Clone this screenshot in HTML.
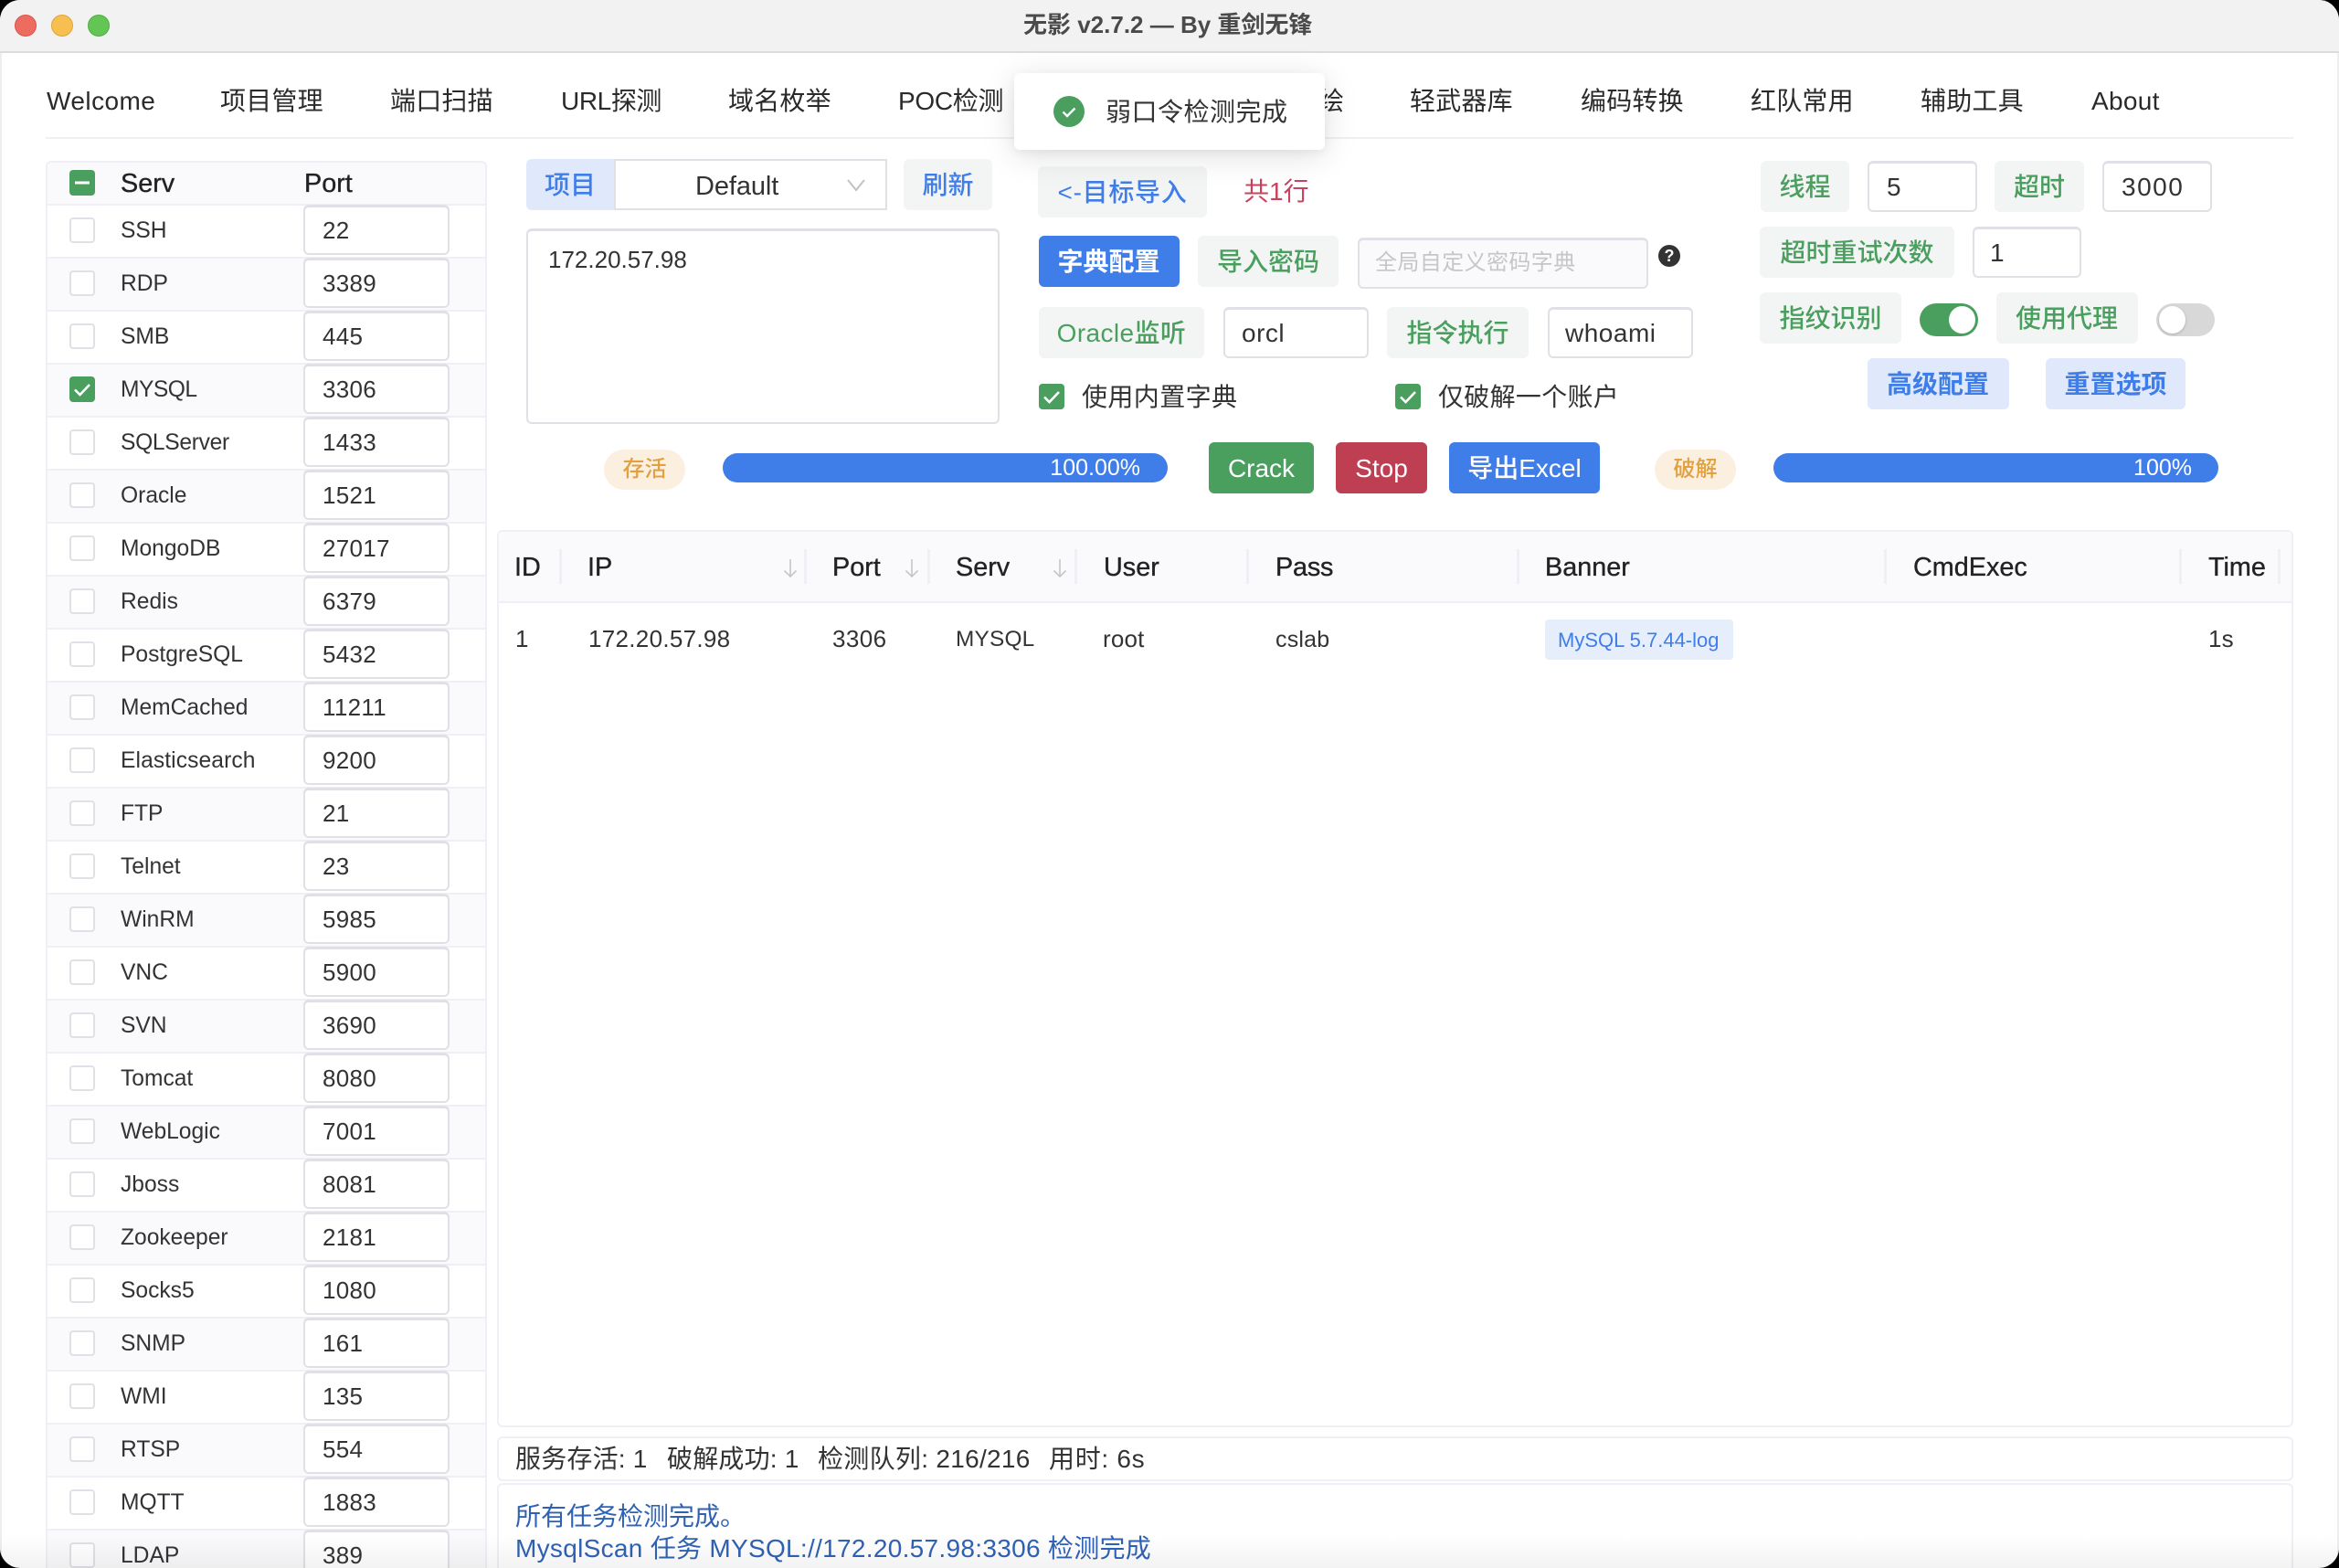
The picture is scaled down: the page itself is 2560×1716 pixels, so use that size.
<!DOCTYPE html>
<html lang="zh">
<head>
<meta charset="utf-8">
<title>无影</title>
<style>
html,body{margin:0;padding:0;background:#000;width:2560px;height:1716px;overflow:hidden}
body{font-family:"Liberation Sans","Noto Sans CJK SC",sans-serif;color:#333}
#win{position:absolute;left:0;top:0;width:2560px;height:1716px;background:#fff;border-radius:22px;overflow:hidden}
.a{position:absolute;white-space:nowrap}
#tb{position:absolute;left:0;top:0;width:2560px;height:58px;background:#f2f2f2;border-bottom:2px solid #dcdcdc;box-sizing:border-box}
.tl{position:absolute;top:16px;width:24px;height:24px;border-radius:50%;box-sizing:border-box}
.nav{position:absolute;top:91px;line-height:40px;font-size:28px;color:#2a2a2a;white-space:nowrap}
.b{position:absolute;height:56px;line-height:58px;border-radius:6px;text-align:center;font-size:28px;font-weight:500;white-space:nowrap;box-sizing:border-box}
.g{background:#f3f5f5;color:#4a9f5f}
.bl{background:#f3f5f5;color:#3f7de8}
.lb{background:#e0e9fb;color:#3f7de8}
.s{color:#fff}
.in{position:absolute;height:56px;line-height:52px;border:2px solid #e0e0e6;border-top-width:3px;border-radius:6px;background:#fff;box-sizing:border-box;font-size:28px;color:#333;white-space:nowrap;letter-spacing:.5px}
.cb{position:absolute;width:28px;height:28px;box-sizing:border-box;border-radius:4px;border:2px solid #e0e0e6;background:#fff}
.cb.on{background:#4a9f5f;border:none}
.cb svg{position:absolute;left:0;top:0;width:28px;height:28px}
#lt{position:absolute;left:50px;top:176px;width:483px;height:1560px;border:2px solid #efeff5;border-radius:6px;box-sizing:border-box;overflow:hidden}
#lh{position:relative;height:45px;background:#fafafc;border-bottom:2px solid #efeff5;box-sizing:content-box}
.r{position:relative;height:56px;border-bottom:2px solid #efeff5;background:#fff}
.r.e{background:#fafafc}
.r .cb{left:24px;top:13px}
.r .n{position:absolute;left:80px;top:0;line-height:56px;font-size:24.6px;color:#333;white-space:nowrap}
.r .p{position:absolute;left:280px;top:-1px;width:160px;height:55px;border:2px solid #e0e0e6;border-top-width:3px;border-radius:6px;background:#fff;box-sizing:border-box;padding-left:19px;line-height:51px;font-size:26px;letter-spacing:.3px;color:#333}
.th{position:absolute;top:601px;line-height:40px;font-size:28.8px;color:#222;-webkit-text-stroke:.35px #222;white-space:nowrap}
.td{position:absolute;top:679px;line-height:40px;font-size:26px;color:#333;letter-spacing:.2px;white-space:nowrap}
.sep{position:absolute;top:601px;width:3px;height:38px;background:#efeff5}
.ar{position:absolute;top:611px;width:16px;height:22px}
.box{position:absolute;left:544px;width:1966px;border:2px solid #efeff5;border-radius:6px;box-sizing:border-box;background:#fff}
.st{position:absolute;top:1577px;line-height:40px;font-size:28px;color:#333;white-space:nowrap;letter-spacing:.2px}
</style>
</head>
<body>
<div id="win">
  <div id="tb"></div>
  <div class="tl" style="left:16px;background:#ee6b60;border:1px solid #d9534a"></div>
  <div class="tl" style="left:56px;background:#f6bf4f;border:1px solid #dfa33c"></div>
  <div class="tl" style="left:96px;background:#62c554;border:1px solid #4fae42"></div>
  <div class="a" style="left:1120px;top:7px;line-height:40px;font-size:26px;font-weight:700;color:#4a4a4a">无影 v2.7.2 — By 重剑无锋</div>

  <div class="nav" style="left:51px;letter-spacing:.45px">Welcome</div>
  <div class="nav" style="left:241px;letter-spacing:.2px">项目管理</div>
  <div class="nav" style="left:427px;letter-spacing:.2px">端口扫描</div>
  <div class="nav" style="left:614px;letter-spacing:-.4px">URL探测</div>
  <div class="nav" style="left:797px;letter-spacing:.2px">域名枚举</div>
  <div class="nav" style="left:983px;letter-spacing:-.3px">POC检测</div>
  <div class="nav" style="left:1359px">空间测绘</div>
  <div class="nav" style="left:1543px;letter-spacing:.2px">轻武器库</div>
  <div class="nav" style="left:1730px;letter-spacing:.2px">编码转换</div>
  <div class="nav" style="left:1916px;letter-spacing:.2px">红队常用</div>
  <div class="nav" style="left:2102px;letter-spacing:.2px">辅助工具</div>
  <div class="nav" style="left:2289px;letter-spacing:.3px">About</div>
  <div class="a" style="left:50px;top:150px;width:2460px;height:2px;background:#efeff5"></div>

  <!-- left table -->
  <div id="lt">
    <div id="lh">
      <div class="cb on" style="left:24px;top:8px"><svg viewBox="0 0 28 28"><path d="M6 14H22" stroke="#fff" stroke-width="3" fill="none"/></svg></div>
      <div class="a" style="left:80px;top:3px;line-height:40px;font-size:28.8px;color:#222;-webkit-text-stroke:.35px #222">Serv</div>
      <div class="a" style="left:281px;top:3px;line-height:40px;font-size:28.8px;color:#222;-webkit-text-stroke:.35px #222">Port</div>
    </div>
    <div class="r"><div class="cb"></div><div class="n">SSH</div><div class="p">22</div></div>
    <div class="r e"><div class="cb"></div><div class="n">RDP</div><div class="p">3389</div></div>
    <div class="r"><div class="cb"></div><div class="n">SMB</div><div class="p">445</div></div>
    <div class="r e"><div class="cb on"><svg viewBox="0 0 28 28"><path d="M6 14.5L11.5 20L22 9" stroke="#fff" stroke-width="2.6" fill="none"/></svg></div><div class="n" style="letter-spacing:-.5px">MYSQL</div><div class="p">3306</div></div>
    <div class="r"><div class="cb"></div><div class="n" style="letter-spacing:-.3px">SQLServer</div><div class="p">1433</div></div>
    <div class="r e"><div class="cb"></div><div class="n">Oracle</div><div class="p">1521</div></div>
    <div class="r"><div class="cb"></div><div class="n">MongoDB</div><div class="p">27017</div></div>
    <div class="r e"><div class="cb"></div><div class="n">Redis</div><div class="p">6379</div></div>
    <div class="r"><div class="cb"></div><div class="n">PostgreSQL</div><div class="p">5432</div></div>
    <div class="r e"><div class="cb"></div><div class="n">MemCached</div><div class="p">11211</div></div>
    <div class="r"><div class="cb"></div><div class="n" style="letter-spacing:.1px">Elasticsearch</div><div class="p">9200</div></div>
    <div class="r e"><div class="cb"></div><div class="n">FTP</div><div class="p">21</div></div>
    <div class="r"><div class="cb"></div><div class="n">Telnet</div><div class="p">23</div></div>
    <div class="r e"><div class="cb"></div><div class="n">WinRM</div><div class="p">5985</div></div>
    <div class="r"><div class="cb"></div><div class="n">VNC</div><div class="p">5900</div></div>
    <div class="r e"><div class="cb"></div><div class="n">SVN</div><div class="p">3690</div></div>
    <div class="r"><div class="cb"></div><div class="n">Tomcat</div><div class="p">8080</div></div>
    <div class="r e"><div class="cb"></div><div class="n">WebLogic</div><div class="p">7001</div></div>
    <div class="r"><div class="cb"></div><div class="n">Jboss</div><div class="p">8081</div></div>
    <div class="r e"><div class="cb"></div><div class="n">Zookeeper</div><div class="p">2181</div></div>
    <div class="r"><div class="cb"></div><div class="n">Socks5</div><div class="p">1080</div></div>
    <div class="r e"><div class="cb"></div><div class="n">SNMP</div><div class="p">161</div></div>
    <div class="r"><div class="cb"></div><div class="n">WMI</div><div class="p">135</div></div>
    <div class="r e"><div class="cb"></div><div class="n">RTSP</div><div class="p">554</div></div>
    <div class="r"><div class="cb"></div><div class="n">MQTT</div><div class="p">1883</div></div>
    <div class="r e"><div class="cb"></div><div class="n">LDAP</div><div class="p">389</div></div>
  </div>

  <!-- project row -->
  <div class="b lb" style="left:576px;top:174px;width:96px;border-radius:6px 0 0 6px;text-align:left;padding-left:20px">项目</div>
  <div class="in" style="left:672px;top:174px;width:299px;border-radius:0;padding-left:87px;letter-spacing:-.1px;line-height:56px;border-width:2px;border-top-width:2px;font-size:29px">Default</div>
  <svg class="a" style="left:926px;top:194px" width="22" height="18" viewBox="0 0 22 18"><path d="M2 3L11 14L20 3" stroke="#c2c2c2" stroke-width="2" fill="none"/></svg>
  <div class="b bl" style="left:989px;top:174px;width:97px">刷新</div>
  <div class="in" style="left:576px;top:250px;width:518px;height:214px;padding:11px 0 0 22px;line-height:40px;font-size:26px;letter-spacing:0">172.20.57.98</div>

  <!-- middle col -->
  <div class="b bl" style="left:1136px;top:182px;width:185px;letter-spacing:.7px;background:#f3f5f5">&lt;-目标导入</div>
  <div class="a" style="left:1361px;top:190px;line-height:40px;font-size:28px;color:#c9435e">共1行</div>
  <div class="b s" style="left:1137px;top:258px;width:154px;background:#3f7de8;font-weight:700;padding-right:1px">字典配置</div>
  <div class="b g" style="left:1311px;top:258px;width:154px">导入密码</div>
  <div class="in" style="left:1486px;top:260px;width:318px;background:#fafafc;color:#c6c6c6;font-size:24px;padding-left:17px;letter-spacing:.4px;line-height:50px">全局自定义密码字典</div>
  <div class="a" style="left:1815px;top:268px;width:24px;height:24px;border-radius:50%;background:#333;color:#fff;font-size:18px;line-height:24px;text-align:center;font-weight:700">?</div>
  <div class="b g" style="left:1137px;top:336px;width:181px;letter-spacing:.4px">Oracle监听</div>
  <div class="in" style="left:1339px;top:336px;width:159px;padding-left:18px">orcl</div>
  <div class="b g" style="left:1518px;top:336px;width:155px">指令执行</div>
  <div class="in" style="left:1694px;top:336px;width:159px;padding-left:17px">whoami</div>
  <div class="cb on" style="left:1137px;top:420px"><svg viewBox="0 0 28 28"><path d="M6 14.5L11.5 20L22 9" stroke="#fff" stroke-width="2.6" fill="none"/></svg></div>
  <div class="a" style="left:1184px;top:415px;line-height:40px;font-size:28px;color:#333;letter-spacing:.4px">使用内置字典</div>
  <div class="cb on" style="left:1527px;top:420px"><svg viewBox="0 0 28 28"><path d="M6 14.5L11.5 20L22 9" stroke="#fff" stroke-width="2.6" fill="none"/></svg></div>
  <div class="a" style="left:1574px;top:415px;line-height:40px;font-size:28px;color:#333;letter-spacing:.3px">仅破解一个账户</div>

  <!-- right col -->
  <div class="b g" style="left:1927px;top:176px;width:97px">线程</div>
  <div class="in" style="left:2044px;top:176px;width:120px;padding-left:19px">5</div>
  <div class="b g" style="left:2183px;top:176px;width:98px">超时</div>
  <div class="in" style="left:2301px;top:176px;width:120px;padding-left:19px;letter-spacing:1.5px">3000</div>
  <div class="b g" style="left:1926px;top:248px;width:213px">超时重试次数</div>
  <div class="in" style="left:2159px;top:248px;width:119px;padding-left:17px">1</div>
  <div class="b g" style="left:1926px;top:320px;width:155px">指纹识别</div>
  <div class="a" style="left:2101px;top:332px;width:64px;height:36px;border-radius:18px;background:#4a9f5f"></div>
  <div class="a" style="left:2133px;top:335px;width:29px;height:30px;border-radius:50%;background:#fff"></div>
  <div class="b g" style="left:2185px;top:320px;width:155px;padding-right:1px">使用代理</div>
  <div class="a" style="left:2360px;top:332px;width:64px;height:36px;border-radius:18px;background:#d8d8d8"></div>
  <div class="a" style="left:2363px;top:335px;width:29px;height:30px;border-radius:50%;background:#fff;box-shadow:0 1px 3px rgba(0,0,0,.2)"></div>
  <div class="b lb" style="left:2044px;top:392px;width:155px;font-weight:700;padding-right:1px">高级配置</div>
  <div class="b lb" style="left:2239px;top:392px;width:153px;font-weight:700">重置选项</div>

  <!-- progress row -->
  <div class="a" style="left:661px;top:492px;width:89px;height:44px;line-height:44px;border-radius:22px;background:#fbefe0;color:#e2a03f;font-size:24px;font-weight:500;text-align:center">存活</div>
  <div class="a" style="left:791px;top:496px;width:487px;height:32px;border-radius:16px;background:#3f7de8"></div>
  <div class="a" style="left:791px;top:496px;width:457px;height:32px;line-height:32px;text-align:right;color:#fff;font-size:25px">100.00%</div>
  <div class="b s" style="left:1323px;top:484px;width:115px;background:#4a9f5f;line-height:57px">Crack</div>
  <div class="b s" style="left:1462px;top:484px;width:100px;background:#bf3f52;line-height:57px">Stop</div>
  <div class="b s" style="left:1586px;top:484px;width:165px;background:#3f7de8;line-height:57px">导出Excel</div>
  <div class="a" style="left:1811px;top:492px;width:89px;height:44px;line-height:44px;border-radius:22px;background:#fbefe0;color:#e2a03f;font-size:24px;font-weight:500;text-align:center">破解</div>
  <div class="a" style="left:1941px;top:496px;width:487px;height:32px;border-radius:16px;background:#3f7de8"></div>
  <div class="a" style="left:1941px;top:496px;width:458px;height:32px;line-height:32px;text-align:right;color:#fff;font-size:25px">100%</div>

  <!-- result table -->
  <div class="box" style="top:580px;height:982px"></div>
  <div class="a" style="left:546px;top:582px;width:1962px;height:76px;background:#fafafc;border-radius:6px 6px 0 0;border-bottom:2px solid #efeff5"></div>
  <div class="th" style="left:563px">ID</div>
  <div class="th" style="left:643px">IP</div>
  <div class="th" style="left:911px">Port</div>
  <div class="th" style="left:1046px">Serv</div>
  <div class="th" style="left:1208px">User</div>
  <div class="th" style="left:1396px;letter-spacing:-.2px">Pass</div>
  <div class="th" style="left:1691px">Banner</div>
  <div class="th" style="left:2094px">CmdExec</div>
  <div class="th" style="left:2417px">Time</div>
  <div class="sep" style="left:612px"></div>
  <div class="sep" style="left:880px"></div>
  <div class="sep" style="left:1015px"></div>
  <div class="sep" style="left:1176px"></div>
  <div class="sep" style="left:1364px"></div>
  <div class="sep" style="left:1660px"></div>
  <div class="sep" style="left:2062px"></div>
  <div class="sep" style="left:2385px"></div>
  <div class="sep" style="left:2493px"></div>
  <svg class="ar" style="left:857px" viewBox="0 0 16 22"><path d="M8 1V20M1.5 13.5L8 20L14.5 13.5" stroke="#c6c6c6" stroke-width="1.6" fill="none"/></svg>
  <svg class="ar" style="left:990px" viewBox="0 0 16 22"><path d="M8 1V20M1.5 13.5L8 20L14.5 13.5" stroke="#c6c6c6" stroke-width="1.6" fill="none"/></svg>
  <svg class="ar" style="left:1152px" viewBox="0 0 16 22"><path d="M8 1V20M1.5 13.5L8 20L14.5 13.5" stroke="#c6c6c6" stroke-width="1.6" fill="none"/></svg>
  <div class="td" style="left:564px">1</div>
  <div class="td" style="left:644px;letter-spacing:.3px">172.20.57.98</div>
  <div class="td" style="left:911px;letter-spacing:.4px">3306</div>
  <div class="td" style="left:1046px;font-size:24.4px;top:680px">MYSQL</div>
  <div class="td" style="left:1207px">root</div>
  <div class="td" style="left:1396px;font-size:25px;top:680px">cslab</div>
  <div class="a" style="left:1691px;top:678px;width:206px;height:44px;line-height:45px;background:#e6eefb;border-radius:4px;color:#3f7de8;font-size:22px;padding-left:14px;box-sizing:border-box">MySQL 5.7.44-log</div>
  <div class="td" style="left:2417px">1s</div>

  <!-- stats -->
  <div class="box" style="top:1572px;height:49px"></div>
  <div class="st" style="left:564px">服务存活: 1</div>
  <div class="st" style="left:730px">破解成功: 1</div>
  <div class="st" style="left:895px;letter-spacing:.3px">检测队列: 216/216</div>
  <div class="st" style="left:1148px;letter-spacing:.7px">用时: 6s</div>

  <!-- log -->
  <div class="box" style="top:1623px;height:140px"></div>
  <div class="a" style="left:564px;top:1640px;line-height:40px;font-size:28px;color:#2f62b5">所有任务检测完成。</div>
  <div class="a" style="left:564px;top:1675px;line-height:40px;font-size:28px;color:#2f62b5;letter-spacing:.3px">MysqlScan 任务 MYSQL://172.20.57.98:3306 检测完成</div>

  <!-- toast -->
  <div class="a" style="left:1110px;top:80px;width:340px;height:84px;background:#fff;border-radius:6px;box-shadow:0 6px 36px rgba(0,0,0,.13),0 3px 10px rgba(0,0,0,.05)"></div>
  <svg class="a" style="left:1153px;top:105px" width="34" height="34" viewBox="0 0 34 34"><circle cx="17" cy="17" r="17" fill="#4a9f5f"/><path d="M10.5 17.5L15 22L23.5 13.5" stroke="#fff" stroke-width="2.4" fill="none"/></svg>
  <div class="a" style="left:1210px;top:103px;line-height:40px;font-size:28px;color:#333;letter-spacing:.5px">弱口令检测完成</div>

  <!-- edges -->
  <div class="a" style="left:0;top:58px;width:2px;height:1658px;background:#eeeef2"></div>
  <div class="a" style="left:2558px;top:58px;width:2px;height:1658px;background:#eeeef2"></div>
  <div class="a" style="left:0;top:1680px;width:2560px;height:36px;background:linear-gradient(to bottom,rgba(0,0,0,0),rgba(0,0,0,.05))"></div>
</div>
</body>
</html>
